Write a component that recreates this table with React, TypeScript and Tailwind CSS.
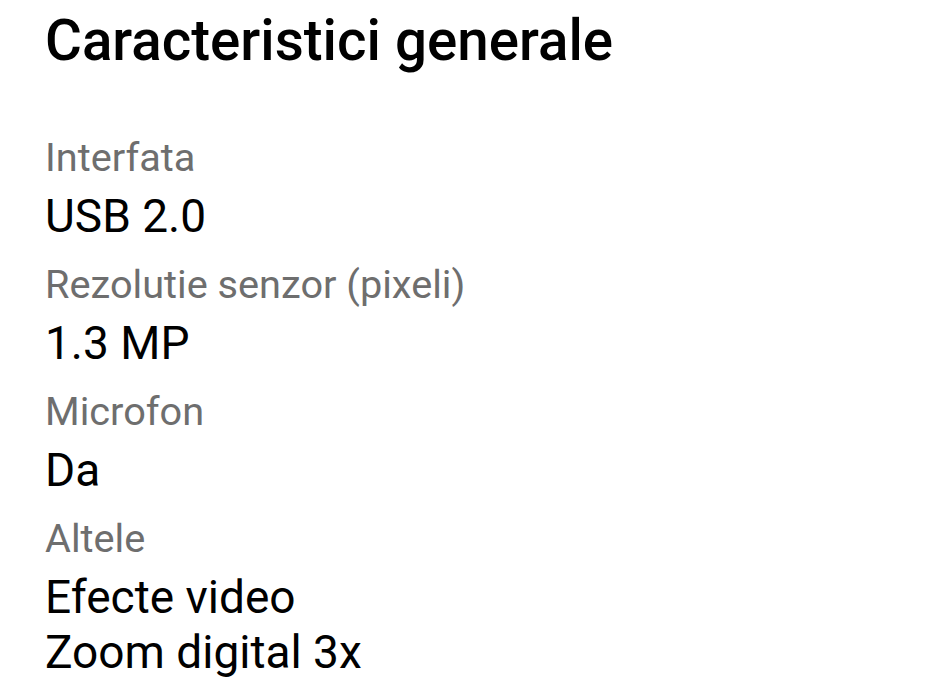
const SPECS = [
  { label: "Interfata", values: ["USB 2.0"] },
  { label: "Rezolutie senzor (pixeli)", values: ["1.3 MP"] },
  { label: "Microfon", values: ["Da"] },
  { label: "Altele", values: ["Efecte video", "Zoom digital 3x"] },
];

export default function App() {
  return (
    <div
      className="min-h-[700px] w-[939px] bg-white pl-[45px] pt-[8px]"
      style={{ fontFamily: "Roboto, 'Noto Sans', sans-serif" }}
    >
      <h1 className="text-[56.5px] font-medium leading-[66px] text-black">
        Caracteristici generale
      </h1>
      <dl className="mt-[53px]">
        {SPECS.map((spec) => (
          <div key={spec.label} className="mb-[10px]">
            <dt className="text-[39.7px] leading-[62px] text-[#6e6e6e]">
              {spec.label}
            </dt>
            {spec.values.map((v) => (
              <dd key={v} className="text-[46px] leading-[55px] text-black">
                {v}
              </dd>
            ))}
          </div>
        ))}
      </dl>
    </div>
  );
}
